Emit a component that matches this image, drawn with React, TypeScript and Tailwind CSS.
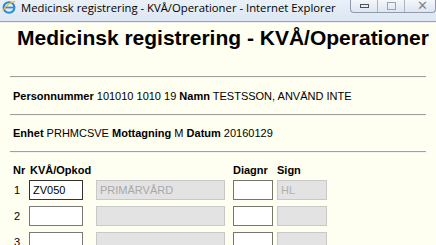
import React from "react";

type Row = {
	nr: number;
	kva: string;
	text: string;
	diagnr: string;
	sign: string;
	active?: boolean;
};

const rows: Row[] = [
	{ nr: 1, kva: "ZV050", text: "PRIMÄRVÅRD", diagnr: "", sign: "HL", active: true },
	{ nr: 2, kva: "", text: "", diagnr: "", sign: "" },
	{ nr: 3, kva: "", text: "", diagnr: "", sign: "" },
];

function IeIcon() {
	return (
		<svg width="14" height="14" viewBox="0 0 16 16">
			<ellipse cx="8" cy="8.5" rx="6.2" ry="6" fill="none" stroke="#2a8ad8" strokeWidth="2.4" />
			<path d="M3 8.6h10.5" stroke="#2a8ad8" strokeWidth="2" />
			<path d="M1 12.5c3-6 9-10.5 14-11" fill="none" stroke="#f2b632" strokeWidth="1.4" />
		</svg>
	);
}

function Hr() {
	return <div className="mx-[10px] border-t border-b border-t-[#a0a0a0] border-b-[#f4f4f4]" />;
}

export default function App() {
	return (
		<div
			className="h-[245px] w-[436px] overflow-hidden bg-[#fefef1] text-black"
			style={{ fontFamily: '"Liberation Sans", Arial, sans-serif' }}
		>
			{/* window title bar */}
			<div className="flex h-[21px] items-start bg-gradient-to-b from-[#e9f0f8] to-[#dce7f3]">
				<div className="ml-[2px] shrink-0">
					<IeIcon />
				</div>
				<span
					className="ml-[5px] whitespace-nowrap text-[11.3px] leading-[15px] text-black"
					style={{ fontFamily: '"Open Sans", "Noto Sans", sans-serif' }}
				>
					Medicinsk registrering - KVÅ/Operationer - Internet Explorer
				</span>
				<div className="ml-auto flex h-[13px] shrink-0 items-stretch rounded-b-[4px] border border-t-0 border-[#8d9bad] bg-gradient-to-b from-[#f4f7fb] to-[#dfe6ef]">
					<div className="flex w-[27px] items-center justify-center border-r border-[#a9b5c4]">
						<div className="h-[4px] w-[9px] border border-[#4a5260]" />
					</div>
					<div className="flex w-[27px] items-center justify-center border-r border-[#a9b5c4]">
						<div className="h-[8px] w-[9px] border border-[#9aa3ae]" />
					</div>
					<div className="flex w-[30px] items-start justify-center pl-[4px] text-[13px] leading-[11px] text-[#7d8590]">
						✕
					</div>
				</div>
			</div>
			<div className="h-[2px] border-t border-[#9aa4b0] bg-[#f0f0f0]" />

			<h1 className="ml-[10px] mt-[3px] whitespace-nowrap text-center text-[21px] font-bold leading-[24px]">
				Medicinsk registrering - KVÅ/Operationer
			</h1>

			<div className="mt-[26px] text-[11px] leading-[13px]">
				<Hr />
				<p className="px-[13px] pb-[11px] pt-[12px]">
					<b>Personnummer</b> 101010 1010 19 <b>Namn</b> TESTSSON, ANVÄND INTE
				</p>
				<Hr />
				<p className="px-[13px] pb-[11px] pt-[11px]">
					<b>Enhet</b> PRHMCSVE <b>Mottagning</b> M <b>Datum</b> 20160129
				</p>
				<Hr />
			</div>

			<div className="mt-[11px] px-[13px] text-[11px] leading-[13px]">
				<div className="flex font-bold">
					<span className="w-[17px]">Nr</span>
					<span className="w-[203px]">KVÅ/Opkod</span>
					<span className="w-[44px]">Diagnr</span>
					<span>Sign</span>
				</div>
				<div className="mt-[3px] flex flex-col gap-[6px]">
					{rows.map((r) => (
						<div key={r.nr} className="flex items-center">
							<span className="w-[16px] pl-[1px]">{r.nr}</span>
							<div
								className={`flex h-[20px] w-[54px] items-center border bg-white px-[3px] ${
									r.active ? "border-[#333333]" : "border-[#7a7a7a]"
								}`}
							>
								{r.kva}
							</div>
							<div className="ml-[13px] flex h-[20px] w-[129px] items-center border border-[#c8c8c8] bg-[#e3e3e3] px-[3px] text-[#a8a8a8]">
								{r.text}
							</div>
							<div className="ml-[8px] h-[20px] w-[40px] border border-[#76766c] bg-white">{r.diagnr}</div>
							<div className="ml-[4px] flex h-[20px] w-[50px] items-center border border-[#c8c8c8] bg-[#e3e3e3] px-[3px] text-[#b0b0b0]">
								{r.sign}
							</div>
						</div>
					))}
				</div>
			</div>
		</div>
	);
}
